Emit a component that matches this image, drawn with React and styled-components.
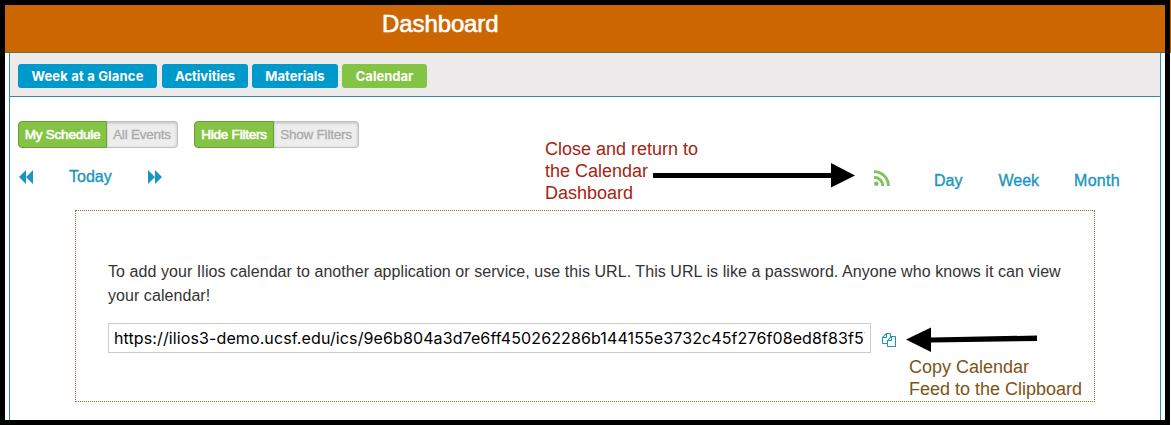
import React from "react";
import styled, { createGlobalStyle } from "styled-components";

const helv = '"Liberation Sans", Arial, sans-serif';
const blue = "#0099cc";
const green = "#84c444";

const GlobalStyle = createGlobalStyle`
  * { box-sizing: border-box; }
  body { margin: 0; background: #fff; font-family: ${helv}; }
  button { font: inherit; }
`;

const Backdrop = styled.div`
  width: 1171px;
  height: 425px;
  background: linear-gradient(#cc6600 53px, #fff 53px);
`;

const Window = styled.div`
  position: relative;
  width: 1170px;
  height: 425px;
  overflow: hidden;
  border: 5px solid #000;
  background: #fff;
  display: flex;
  flex-direction: column;
`;

const Header = styled.header`
  flex: none;
  height: 48px;
  background: #cc6600;
  border-bottom: 1px solid #66703c;
  padding: 4px 0 0 377px;
`;

const Title = styled.h1`
  margin: 0;
  font: 400 24px/30px ${helv};
  color: #fff;
  -webkit-text-stroke: 0.6px #fff;
`;

const Fit = styled.span`
  display: inline-block;
  white-space: nowrap;
  letter-spacing: ${(p) => p.$ls || 0}px;
`;

const Page = styled.main`
  flex: 1;
  margin: 0 4px 0 4px;
  border: 1px solid #3389a3;
  border-width: 0 1px;
`;

const Tabs = styled.nav`
  display: flex;
  gap: 4px;
  height: 44px;
  padding: 11px 8px 0;
  background: #edebec;
  border-bottom: 1px solid #3389a3;
`;

const Tab = styled.button`
  width: ${(p) => p.$w}px;
  height: 24px;
  padding: 0;
  border: 0;
  border-radius: 3px;
  background: ${(p) => (p.$active ? green : blue)};
  color: #fff;
  font: 700 13px/24px Inter, sans-serif;
  letter-spacing: ${(p) => p.$ls || 0}px;
  text-align: center;

  &:first-child { margin-right: 1px; }
`;

const Filters = styled.div`
  display: flex;
  gap: 16px;
  padding: 24px 8px 0;
`;

const Toggle = styled.div`
  display: flex;
  height: 27px;
`;

const Option = styled.button`
  width: ${(p) => p.$w}px;
  padding: 0;
  font: 400 13.5px/24px ${helv};
  letter-spacing: -0.22px;
  border: 1px solid ${(p) => (p.$on ? "#6a9e38" : "#c0c0c0")};
  border-left-width: ${(p) => (p.$on ? 1 : 0)}px;
  border-radius: ${(p) => (p.$on ? "4px 0 0 4px" : "0 4px 4px 0")};
  background: ${(p) => (p.$on ? green : "#ededed")};
  color: ${(p) => (p.$on ? "#fff" : "#aaa")};
  -webkit-text-stroke: ${(p) => (p.$on ? "0.6px #fff" : "0.3px #aaa")};
  box-shadow: ${(p) => (p.$on ? "none" : "inset 0 1px 3px #bbb")};
`;

const Controls = styled.div`
  display: flex;
  justify-content: space-between;
  height: 62px;
  padding: 19px 40px 0 9px;
`;

const Pager = styled.div`
  display: flex;
  height: 20px;
  align-items: center;
`;

const Views = styled.div`
  display: flex;
  align-items: center;
  height: 20px;
  margin-top: 4px;
`;

const NavLink = styled.a`
  margin-left: ${(p) => p.$gap}px;
  color: #1b95c0;
  font: 400 16px/20px ${helv};
  letter-spacing: ${(p) => p.$ls || 0}px;
  -webkit-text-stroke: 0.35px #1b95c0;
`;

const Arrows = styled.svg`
  width: 14px;
  height: 14px;
  margin-left: ${(p) => p.$gap || 0}px;
  fill: #1b95c0;
`;

const RssIcon = styled.svg`
  width: 16px;
  height: 16px;
  margin-top: -6px;
`;

const Feed = styled.section`
  width: 1020px;
  height: 192px;
  margin-left: 65px;
  border: 1px dotted #98702f;
  padding: 49px 32px 0;
`;

const Help = styled.p`
  margin: 0;
  color: #333;
  font: 400 16px/24px ${helv};
`;

const UrlRow = styled.div`
  display: flex;
  align-items: center;
  gap: 11px;
  margin-top: 15px;
`;

const UrlBox = styled.div`
  width: 763px;
  height: 30px;
  padding: 0 5px;
  border: 1px solid #ccc;
  color: #000;
  font: 400 16px/29px Inter, sans-serif;
  letter-spacing: 0.11px;
`;

const UrlClip = styled.div`
  overflow: hidden;
  white-space: nowrap;
`;

const CopyIcon = styled.svg`
  width: 14px;
  height: 14px;
  margin-top: 4px;
  fill: #1b95c0;
`;

const Note = styled.div`
  position: absolute;
  left: ${(p) => p.$x}px;
  top: ${(p) => p.$y}px;
  color: ${(p) => p.$color};
  font: 400 18px/22px ${helv};
  white-space: nowrap;
`;

const Pointer = styled.svg`
  position: absolute;
  left: ${(p) => p.$x}px;
  top: ${(p) => p.$y}px;
`;

export default function App() {
  return (
    <Backdrop>
      <GlobalStyle />
      <Window>
        <Header><Title><Fit $ls={-0.1}>Dashboard</Fit></Title></Header>
        <Page>
          <Tabs>
            <Tab $w={139} $ls={0.18}>Week at a Glance</Tab>
            <Tab $w={86}>Activities</Tab>
            <Tab $w={86}>Materials</Tab>
            <Tab $w={85} $active>Calendar</Tab>
          </Tabs>
          <Filters>
            <Toggle>
              <Option $w={89} $on>My Schedule</Option>
              <Option $w={71}>All Events</Option>
            </Toggle>
            <Toggle>
              <Option $w={80} $on>Hide Filters</Option>
              <Option $w={85}>Show Filters</Option>
            </Toggle>
          </Filters>
          <Controls>
            <Pager>
              <Arrows viewBox="0 0 14 14"><path d="M7 0v14L0 7zM14 0v14L7 7z" /></Arrows>
              <NavLink $gap={36}>Today</NavLink>
              <Arrows $gap={36} viewBox="0 0 14 14"><path d="M0 0v14l7-7zM7 0v14l7-7z" /></Arrows>
            </Pager>
            <Views>
              <RssIcon viewBox="0 0 16 16" fill="none" stroke="#84c060" strokeWidth="2.9">
                <circle cx="2.3" cy="13.7" r="2.3" fill="#84c060" stroke="none" />
                <path d="M0 7.2A8.8 8.8 0 0 1 8.8 16M0 1.600A14.4 14.4 0 0 1 14.4 16" />
              </RssIcon>
              <NavLink $gap={44}>Day</NavLink>
              <NavLink $gap={36}>Week</NavLink>
              <NavLink $gap={35} $ls={0.3}>Month</NavLink>
            </Views>
          </Controls>
          <Feed>
            <Help>
              <Fit $ls={0.062}>To add your Ilios calendar to another application or service, use this URL. This URL is like a password. Anyone who knows it can view</Fit>
              <br />
              <Fit $ls={0.06}>your calendar!</Fit>
            </Help>
            <UrlRow>
              <UrlBox><UrlClip>https://ilios3-demo.ucsf.edu/ics/9e6b804a3d7e6ff450262286b144155e3732c45f276f08ed8f83f57</UrlClip></UrlBox>
              <CopyIcon viewBox="0 0 1792 1792">
                <path d="M1696 384q40 0 68 28t28 68v1216q0 40-28 68t-68 28h-960q-40 0-68-28t-28-68v-288h-544q-40 0-68-28t-28-68v-672q0-40 20-88t48-76l408-408q28-28 76-48t88-20h416q40 0 68 28t28 68v328q68-40 128-40h416zm-544 213l-299 299h299v-299zm-640-384l-299 299h299v-299zm196 647l316-316v-416h-384v416q0 40-28 68t-68 28h-416v640h512v-256q0-40 20-88t48-76zm956 804v-1152h-384v416q0 40-28 68t-68 28h-416v640h896z" />
              </CopyIcon>
            </UrlRow>
          </Feed>
        </Page>
        <Note $x={540} $y={133} $color="#a62311">Close and return to<br />the Calendar<br />Dashboard</Note>
        <Pointer $x={648} $y={157} width="204" height="28"><path d="M0 11H178V1L202 13.500 178 25.500V16H0z" /></Pointer>
        <Note $x={904} $y={351} $color="#7e5314">Copy Calendar<br />Feed to the Clipboard</Note>
        <Pointer $x={901} $y={321} width="132" height="28"><path d="M0 13.500L25 1.500V11.500L131 9.500V15L25 16.500V26z" /></Pointer>
      </Window>
    </Backdrop>
  );
}
